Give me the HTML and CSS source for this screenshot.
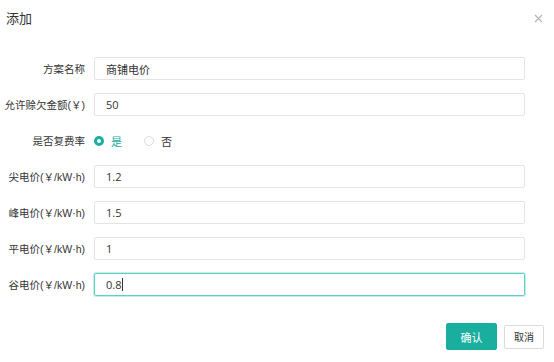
FILE: index.html
```html
<!DOCTYPE html>
<html lang="zh-CN">
<head>
    <meta charset="UTF-8">
    <title>添加</title>
    <link rel="stylesheet" href="styles.css">
</head>
<body>
    <div class="dialog">
        <div class="dialog-header">
            <span class="dialog-title">添加</span>
            <span class="dialog-close">
                <svg width="9" height="9" viewBox="0 0 9 9"><path d="M1 1L8 8M8 1L1 8" stroke="#b4b4b4" stroke-width="1.1"/></svg>
            </span>
        </div>

        <div class="form">
            <label class="form-label">方案名称</label>
            <input class="form-input" type="text" value="商铺电价">

            <label class="form-label">允许赊欠金额(￥)</label>
            <input class="form-input" type="text" value="50">

            <label class="form-label">是否复费率</label>
            <div class="radio-group">
                <span class="radio checked"><span class="radio-dot"></span>是</span>
                <span class="radio"><span class="radio-dot"></span>否</span>
            </div>

            <label class="form-label">尖电价(￥/kW·h)</label>
            <input class="form-input" type="text" value="1.2">

            <label class="form-label">峰电价(￥/kW·h)</label>
            <input class="form-input" type="text" value="1.5">

            <label class="form-label">平电价(￥/kW·h)</label>
            <input class="form-input" type="text" value="1">

            <label class="form-label">谷电价(￥/kW·h)</label>
            <div class="form-input focus">0.8<span class="caret"></span></div>
        </div>

        <div class="dialog-footer">
            <button class="btn btn-primary">确认</button>
            <button class="btn">取消</button>
        </div>
    </div>
</body>
</html>
```

FILE: styles.css
```css
body {
    margin: 0;
    background-color: #fff;
    font-family: "Open Sans", "Noto Sans CJK SC", sans-serif;
    color: #333;
}

.dialog {
    width: 554px;
    height: 362px;
    box-sizing: border-box;
}

.dialog-header {
    height: 35px;
    display: flex;
    align-items: center;
    justify-content: space-between;
    padding: 0 11px 0 6px;
}

.dialog-title {
    font-size: 13px;
    color: #333;
}

.dialog-close {
    display: flex;
    margin-top: 2px;
}

.form {
    display: grid;
    grid-template-columns: 85px 431px;
    column-gap: 9px;
    row-gap: 13px;
    margin-top: 22px;
    align-items: center;
}

.form-label {
    text-align: right;
    font-family: "Liberation Sans", "Noto Sans CJK SC", sans-serif;
    font-size: 10.5px;
    color: #333;
    white-space: nowrap;
}

.form-input {
    box-sizing: border-box;
    height: 23px;
    width: 431px;
    border: 1px solid #e4e4e4;
    border-radius: 2px;
    padding: 0 11px;
    font-family: inherit;
    font-size: 11px;
    color: #333;
    outline: none;
    display: flex;
    align-items: center;
}

.form-input.focus {
    border-color: #5fd0c6;
    box-shadow: 0 0 0 1px #c6eeea;
}

.caret {
    display: inline-block;
    width: 1px;
    height: 13px;
    background-color: #333;
    margin-left: 1px;
}

.radio-group {
    display: flex;
    height: 23px;
    align-items: center;
    gap: 22px;
    font-size: 11px;
}

.radio {
    display: flex;
    align-items: center;
    gap: 7px;
    color: #333;
}

.radio-dot {
    box-sizing: border-box;
    width: 10px;
    height: 10px;
    border-radius: 50%;
    border: 1px solid #dcdcdc;
    background-color: #fff;
}

.radio.checked {
    color: #1aae9f;
}

.radio.checked .radio-dot {
    border: 3px solid #1aae9f;
}

.dialog-footer {
    display: flex;
    justify-content: flex-end;
    align-items: center;
    gap: 7px;
    padding-right: 10px;
    margin-top: 27px;
}

.btn {
    box-sizing: border-box;
    height: 24px;
    width: 40px;
    padding: 0;
    border: 1px solid #dcdcdc;
    border-radius: 2px;
    background-color: #fff;
    color: #333;
    font-family: inherit;
    font-size: 10px;
}

.btn-primary {
    height: 27px;
    width: 51px;
    border-color: #1aae9f;
    background-color: #1aae9f;
    color: #fff;
    font-size: 11px;
}
```
